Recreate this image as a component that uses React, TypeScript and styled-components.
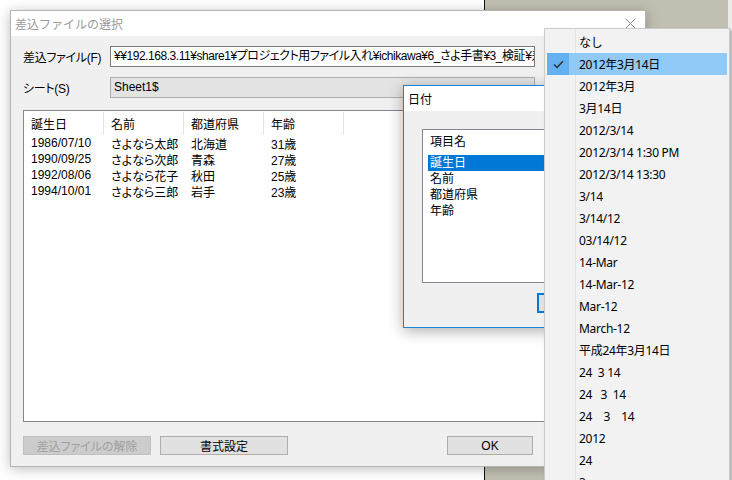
import React from "react";
import styled, { createGlobalStyle } from "styled-components";

const UI_FONT = `"Liberation Sans", "Noto Sans CJK JP", sans-serif`;
const MENU_FONT = `"Noto Sans", "Noto Sans CJK JP", sans-serif`;

const GlobalStyle = createGlobalStyle`
    html, body {
        margin: 0;
        padding: 0;
        overflow: hidden;
        background: #fff;
    }
    * {
        box-sizing: border-box;
    }
`;

interface IPerson {
    birthday: string;
    name: string;
    pref: string;
    age: string;
}

const people: IPerson[] = [
    { birthday: "1986/07/10", name: "さよなら太郎", pref: "北海道", age: "31歳" },
    { birthday: "1990/09/25", name: "さよなら次郎", pref: "青森", age: "27歳" },
    { birthday: "1992/08/06", name: "さよなら花子", pref: "秋田", age: "25歳" },
    { birthday: "1994/10/01", name: "さよなら三郎", pref: "岩手", age: "23歳" },
];

const fieldNames = ["誕生日", "名前", "都道府県", "年齢"];

const dateFormats = [
    "なし",
    "2012年3月14日",
    "2012年3月",
    "3月14日",
    "2012/3/14",
    "2012/3/14 1:30 PM",
    "2012/3/14 13:30",
    "3/14",
    "3/14/12",
    "03/14/12",
    "14-Mar",
    "14-Mar-12",
    "Mar-12",
    "March-12",
    "平成24年3月14日",
    "24  3 14",
    "24   3  14",
    "24    3    14",
    "2012",
    "24",
    "3",
];

const CloseIcon = () => (
    <svg width="11" height="11" viewBox="0 0 11 11">
        <path d="M0.5 0.5 L10.5 10.5 M10.5 0.5 L0.5 10.5" stroke="#8a8a8a" strokeWidth="1" fill="none" />
    </svg>
);

const CheckIcon = () => (
    <svg width="11" height="9" viewBox="0 0 11 9">
        <path d="M1 4.6 L4 7.4 L10 1.2" stroke="#2b2b2b" strokeWidth="1.4" fill="none" />
    </svg>
);

const App = () => {
    const selectedFormat = 1;

    return (
        <>
            <GlobalStyle />
            <Desktop>
                <Pane $w={484} $bg="#ffffff" />
                <Pane $w={1} $bg="#111111" />
                <Pane $bg="#c1bfb1" />
                <Pane $w={4} $bg="#ececec" />

                {/* 差込ファイルの選択 (inactive) */}
                <Window $x={10} $y={10} $w={636} $h={457}>
                    <TitleBar>
                        <TitleText>差込ファイルの選択</TitleText>
                        <CloseBox><CloseIcon /></CloseBox>
                    </TitleBar>
                    <DialogBody>
                        <FieldRow>
                            <FieldLabel>差込ファイル(F)</FieldLabel>
                            <PathBox>¥¥192.168.3.11¥share1¥プロジェクト用ファイル入れ¥ichikawa¥6_さよ手書¥3_検証¥差込ファイル.xlsx</PathBox>
                        </FieldRow>
                        <FieldRow $gap={12}>
                            <FieldLabel>シート(S)</FieldLabel>
                            <SheetCombo>Sheet1$</SheetCombo>
                        </FieldRow>
                        <ListView>
                            <ListHeader>
                                {fieldNames.map(name => <HeaderCell key={name}>{name}</HeaderCell>)}
                            </ListHeader>
                            {people.map(p => (
                                <ListRow key={p.birthday}>
                                    <Cell>{p.birthday}</Cell>
                                    <Cell>{p.name}</Cell>
                                    <Cell>{p.pref}</Cell>
                                    <Cell>{p.age}</Cell>
                                </ListRow>
                            ))}
                        </ListView>
                        <ButtonRow>
                            <DialogButton $w={128} disabled>差込ファイルの解除</DialogButton>
                            <DialogButton $w={128}>書式設定</DialogButton>
                            <Spacer />
                            <DialogButton $w={86}>OK</DialogButton>
                            <DialogButton $w={86} $ml={5}>キャンセル</DialogButton>
                        </ButtonRow>
                    </DialogBody>
                </Window>

                {/* 日付 (active) */}
                <Window $x={403} $y={85} $w={313} $h={243} $active>
                    <TitleBar $h={25}>
                        <TitleText $active>日付</TitleText>
                    </TitleBar>
                    <DateBody>
                        <FieldList>
                            <FieldListHead>項目名</FieldListHead>
                            {fieldNames.map((name, i) => (
                                <FieldItem key={name} $selected={i === 0}>{name}</FieldItem>
                            ))}
                        </FieldList>
                        <DateButtons>
                            <DialogButton $w={75} $h={20} $default>OK</DialogButton>
                            <DialogButton $w={75} $h={20}>キャンセル</DialogButton>
                        </DateButtons>
                    </DateBody>
                </Window>

                {/* 書式メニュー */}
                <FormatMenu>
                    {dateFormats.map((fmt, i) => (
                        <MenuItem key={fmt + i} $selected={i === selectedFormat}>
                            <CheckCell $selected={i === selectedFormat}>
                                {i === selectedFormat && <CheckIcon />}
                            </CheckCell>
                            <ItemLabel>{fmt}</ItemLabel>
                        </MenuItem>
                    ))}
                </FormatMenu>
            </Desktop>
        </>
    );
}

const Desktop = styled.div`
    position: relative;
    display: flex;
    width: 732px;
    height: 480px;
    overflow: hidden;
    font-family: ${UI_FONT};
    font-size: 12px;
    color: #000;
`;
const Pane = styled.div<{ $w?: number; $bg: string }>`
    flex: ${props => props.$w ? `0 0 ${props.$w}px` : '1'};
    height: 100%;
    background: ${props => props.$bg};
`;

const Window = styled.div<{ $x: number; $y: number; $w: number; $h: number; $active?: boolean }>`
    position: absolute;
    left: ${props => props.$x}px;
    top: ${props => props.$y}px;
    width: ${props => props.$w}px;
    height: ${props => props.$h}px;
    display: flex;
    flex-direction: column;
    background: #f0f0f0;
    border: 1px solid ${props => props.$active ? '#1883d7' : '#b4b4b4'};
    box-shadow: ${props => props.$active ? '0 3px 14px rgba(0, 0, 0, 0.32)' : '0 2px 12px rgba(0, 0, 0, 0.26)'};
`;
const TitleBar = styled.div<{ $h?: number }>`
    flex: 0 0 ${props => props.$h ?? 25}px;
    display: flex;
    align-items: center;
    justify-content: space-between;
    padding-left: 4px;
    background: #fff;
`;
const TitleText = styled.span<{ $active?: boolean }>`
    font-family: ${MENU_FONT};
    font-size: 12px;
    color: ${props => props.$active ? '#000' : '#9a9a9a'};
`;
const CloseBox = styled.span`
    display: flex;
    margin-right: 9px;
`;

const DialogBody = styled.div`
    flex: 1;
    display: flex;
    flex-direction: column;
    padding: 10px 12px 11px;
    min-height: 0;
`;
const FieldRow = styled.div<{ $gap?: number }>`
    display: flex;
    align-items: center;
    height: 21px;
    margin-bottom: ${props => props.$gap ?? 10}px;
`;
const FieldLabel = styled.label`
    flex: 0 0 87px;
    font-feature-settings: "palt";
    letter-spacing: -0.3px;
`;
const PathBox = styled.div`
    width: 425px;
    height: 21px;
    padding: 0 3px;
    line-height: 19px;
    white-space: nowrap;
    overflow: hidden;
    background: #fff;
    border: 1px solid #7a7a7a;
    font-feature-settings: "palt";
    letter-spacing: -0.45px;
`;
const SheetCombo = styled(PathBox)`
    background: #e3e3e3;
    border-color: #adadad;
    letter-spacing: 0;
`;

const ListView = styled.div`
    flex: 1;
    display: flex;
    flex-direction: column;
    background: #fff;
    border: 1px solid #828790;
    font-feature-settings: "palt";
`;
const ListHeader = styled.div`
    display: flex;
    height: 24px;
    padding-top: 1px;
`;
const HeaderCell = styled.div`
    flex: 0 0 80px;
    display: flex;
    align-items: center;
    padding-left: 7px;
    border-right: 1px solid #e5e5e5;
`;
const ListRow = styled.div`
    display: flex;
    height: 16px;
`;
const Cell = styled.div`
    flex: 0 0 80px;
    display: flex;
    align-items: center;
    padding-left: 7px;
    white-space: nowrap;
`;

const ButtonRow = styled.div`
    display: flex;
    gap: 9px;
    margin-top: 14px;
`;
const Spacer = styled.div`
    flex: 1;
`;
const DialogButton = styled.button<{ $w: number; $h?: number; $ml?: number; $default?: boolean }>`
    flex: 0 0 ${props => props.$w}px;
    height: ${props => props.$h ?? 19}px;
    margin-left: ${props => props.$ml ?? 0}px;
    padding: 0;
    font-family: ${UI_FONT};
    font-size: 12px;
    font-feature-settings: "palt";
    color: #000;
    background: #e1e1e1;
    border: ${props => props.$default ? '2px solid #0078d7' : '1px solid #adadad'};

    &:disabled {
        color: #a0a0a0;
        background: #cccccc;
        border-color: #bfbfbf;
    }
`;

const DateBody = styled.div`
    flex: 1;
    display: flex;
    flex-direction: column;
    padding: 18px 18px 13px;
`;
const FieldList = styled.div`
    height: 154px;
    padding: 4px 5px;
    background: #fff;
    border: 1px solid #828790;
    font-feature-settings: "palt";
`;
const FieldListHead = styled.div`
    height: 16px;
    line-height: 16px;
    padding-left: 2px;
    margin-bottom: 5px;
`;
const FieldItem = styled.div<{ $selected?: boolean }>`
    height: 16px;
    line-height: 16px;
    padding-left: 2px;
    color: ${props => props.$selected ? '#fff' : '#000'};
    background: ${props => props.$selected ? '#0078d7' : 'transparent'};
`;
const DateButtons = styled.div`
    display: flex;
    justify-content: flex-end;
    gap: 10px;
    margin-top: 10px;
`;

const FormatMenu = styled.div`
    position: absolute;
    left: 544px;
    top: 28px;
    width: 186px;
    height: 470px;
    padding: 2px;
    background: #f2f2f2;
    border: 1px solid #cccccc;
    box-shadow: 2px 2px 3px rgba(0, 0, 0, 0.28);
    font-family: ${MENU_FONT};
    font-size: 12px;

    &::before {
        content: "";
        position: absolute;
        left: 30px;
        top: 0;
        bottom: 0;
        width: 1px;
        background: #e4e4e4;
    }
`;
const MenuItem = styled.div<{ $selected?: boolean }>`
    position: relative;
    display: flex;
    align-items: center;
    height: 22px;
    background: ${props => props.$selected ? '#91c9f7' : 'transparent'};
`;
const CheckCell = styled.span<{ $selected?: boolean }>`
    flex: 0 0 22px;
    height: 100%;
    display: flex;
    align-items: center;
    justify-content: center;
    background: ${props => props.$selected ? '#64b1f1' : 'transparent'};
`;
const ItemLabel = styled.span`
    padding-left: 10px;
    white-space: pre;
    letter-spacing: -0.3px;
    color: #000;
`;

export default App;
